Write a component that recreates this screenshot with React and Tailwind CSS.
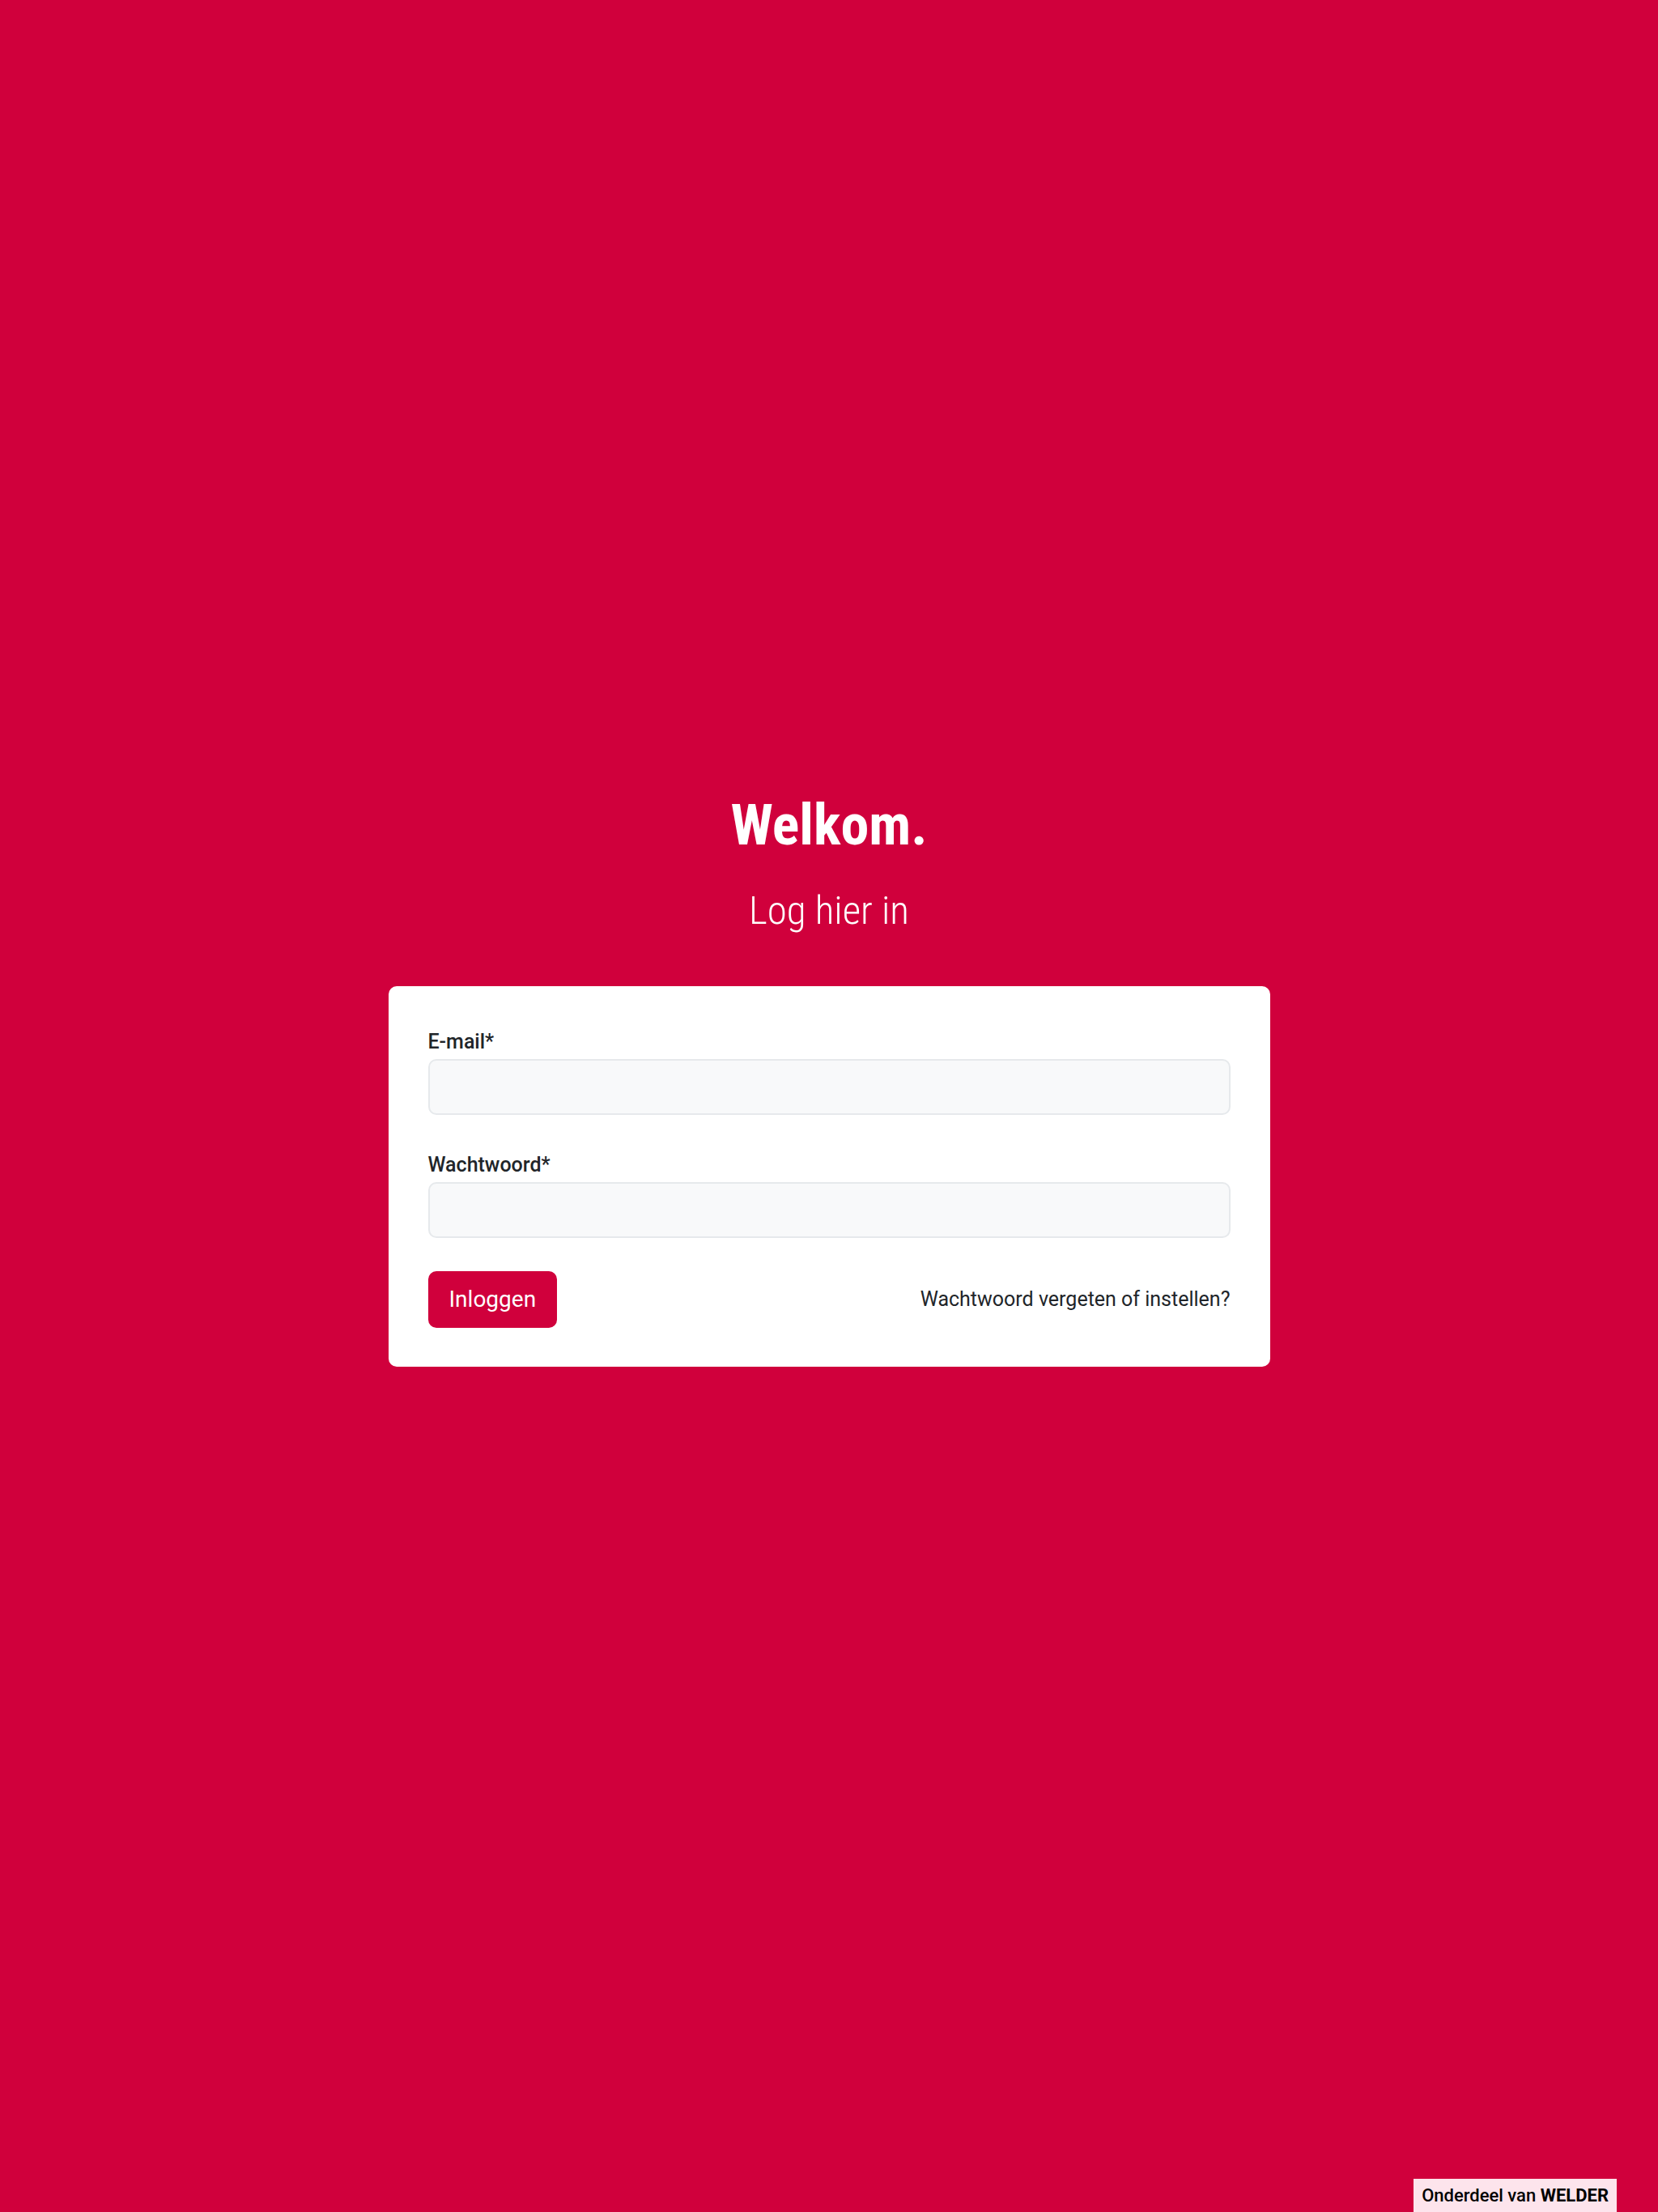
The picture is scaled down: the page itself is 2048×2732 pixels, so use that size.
export default function App() {
  return (
    <div className="relative min-h-[2732px] w-full bg-[#d0003c] flex flex-col items-center pt-[984px] font-['Roboto','Liberation_Sans',sans-serif]">
      <h1 className="text-[70px] leading-none font-bold text-white font-['Roboto_Condensed','Roboto',sans-serif]">
        Welkom.
      </h1>
      <p className="mt-[46px] text-[49px] leading-none font-light text-white font-['Roboto_Condensed','Roboto',sans-serif]">
        Log hier in
      </p>

      <div className="mt-[69px] w-[1089px] bg-white rounded-[10px] pt-[49px] pb-[48px] px-[49px]">
        <label className="block text-[25px] leading-[39px] font-medium text-[#212529]">E-mail*</label>
        <input
          type="email"
          className="mt-[2px] block w-full h-[69px] rounded-[10px] border-2 border-[#e6e9ec] bg-[#f8f9fa] outline-none"
        />

        <label className="mt-[42px] block text-[25px] leading-[39px] font-medium text-[#212529]">Wachtwoord*</label>
        <input
          type="password"
          className="mt-[2px] block w-full h-[69px] rounded-[10px] border-2 border-[#e6e9ec] bg-[#f8f9fa] outline-none"
        />

        <div className="mt-[41px] flex items-center justify-between">
          <button className="h-[70px] px-[26px] rounded-[10px] bg-[#d0003c] text-white text-[28px] leading-none">
            Inloggen
          </button>
          <a href="#" className="text-[25px] text-[#212529]">
            Wachtwoord vergeten of instellen?
          </a>
        </div>
      </div>

      <div className="absolute bottom-0 right-[51px] h-[41px] px-[10px] flex items-center bg-[#fde4ec] text-black text-[22px] font-medium">
        Onderdeel van&nbsp;<span className="font-bold">WELDER</span>
      </div>
    </div>
  );
}
